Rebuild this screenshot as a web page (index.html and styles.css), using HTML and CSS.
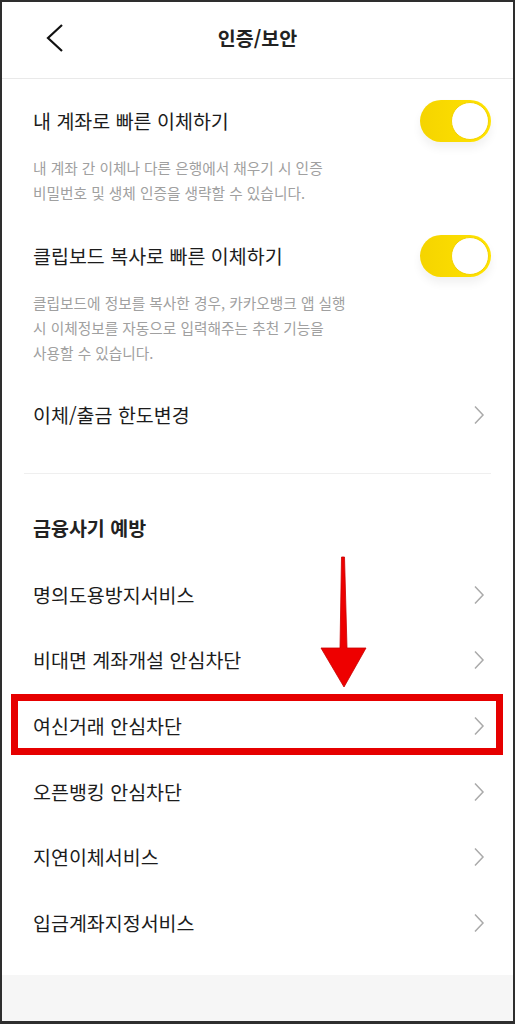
FILE: index.html
```html
<!DOCTYPE html>
<html lang="ko">
<head>
  <meta charset="UTF-8">
  <title>인증/보안</title>
  <link rel="stylesheet" href="styles.css">
</head>
<body>
  <div class="frame">
    <header class="topbar">
      <div class="back">
        <svg width="18" height="30" viewBox="0 0 18 30"><polyline points="16,2 2,15 16,28" fill="none" stroke="#111" stroke-width="2.2"/></svg>
      </div>
      <h1>인증/보안</h1>
      <div></div>
    </header>

    <main class="content">
      <!-- 토글 설정 -->
      <section class="setting first">
        <div class="setting-row">
          <span class="label">내 계좌로 빠른 이체하기</span>
          <span class="toggle on"><span class="knob"></span></span>
        </div>
        <p class="desc">내 계좌 간 이체나 다른 은행에서 채우기 시 인증<br>비밀번호 및 생체 인증을 생략할 수 있습니다.</p>
      </section>

      <section class="setting">
        <div class="setting-row">
          <span class="label">클립보드 복사로 빠른 이체하기</span>
          <span class="toggle on"><span class="knob"></span></span>
        </div>
        <p class="desc">클립보드에 정보를 복사한 경우, 카카오뱅크 앱 실행<br>시 이체정보를 자동으로 입력해주는 추천 기능을<br>사용할 수 있습니다.</p>
      </section>

      <ul class="menu limit">
        <li><span class="label">이체/출금 한도변경</span><svg class="chev" width="20" height="20" viewBox="0 0 20 20"><polyline points="4,1.5 12,10 4,18.5" fill="none" stroke="#aaa" stroke-width="1.5"/></svg></li>
      </ul>

      <hr class="divider">

      <h2 class="group-title">금융사기 예방</h2>
      <ul class="menu">
        <li><span class="label">명의도용방지서비스</span><svg class="chev" width="20" height="20" viewBox="0 0 20 20"><polyline points="4,1.5 12,10 4,18.5" fill="none" stroke="#aaa" stroke-width="1.5"/></svg></li>
        <li><span class="label">비대면 계좌개설 안심차단</span><svg class="chev" width="20" height="20" viewBox="0 0 20 20"><polyline points="4,1.5 12,10 4,18.5" fill="none" stroke="#aaa" stroke-width="1.5"/></svg></li>
        <li><span class="label">여신거래 안심차단</span><svg class="chev" width="20" height="20" viewBox="0 0 20 20"><polyline points="4,1.5 12,10 4,18.5" fill="none" stroke="#aaa" stroke-width="1.5"/></svg></li>
        <li><span class="label">오픈뱅킹 안심차단</span><svg class="chev" width="20" height="20" viewBox="0 0 20 20"><polyline points="4,1.5 12,10 4,18.5" fill="none" stroke="#aaa" stroke-width="1.5"/></svg></li>
        <li><span class="label">지연이체서비스</span><svg class="chev" width="20" height="20" viewBox="0 0 20 20"><polyline points="4,1.5 12,10 4,18.5" fill="none" stroke="#aaa" stroke-width="1.5"/></svg></li>
        <li><span class="label">입금계좌지정서비스</span><svg class="chev" width="20" height="20" viewBox="0 0 20 20"><polyline points="4,1.5 12,10 4,18.5" fill="none" stroke="#aaa" stroke-width="1.5"/></svg></li>
      </ul>
    </main>

    <div class="footer-space"></div>

    <!-- 강조 표시 -->
    <svg class="arrow" width="52" height="140" viewBox="0 0 52 140">
      <polygon points="23.5,4 26.5,4 29,95 48,95 26,134 3,95 22,95" fill="#ee0000" stroke="#c80000" stroke-width="0.8"/>
    </svg>
    <div class="highlight"></div>
  </div>
</body>
</html>
```

FILE: styles.css
```css
* {
  box-sizing: border-box;
}

html, body {
  margin: 0;
  padding: 0;
}

body {
  font-family: "Noto Sans CJK KR", "Noto Sans", sans-serif;
  color: #1c1c1c;
  background: #fff;
}

.frame {
  position: relative;
  height: 1024px;
  border: 2px solid #2e2e2e;
  border-bottom-width: 3px;
  display: flex;
  flex-direction: column;
  overflow: hidden;
}

.topbar {
  height: 77px;
  padding-bottom: 4px;
  border-bottom: 1px solid #e9e9e9;
  display: grid;
  grid-template-columns: 1fr auto 1fr;
  align-items: center;
}

.back {
  padding-left: 44px;
  display: flex;
  align-items: center;
}

.topbar h1 {
  margin: 0;
  font-size: 19.5px;
  font-weight: 700;
  color: #222;
  line-height: 28px;
}

.content {
  padding: 0 22px 19px 31px;
}

.setting {
  margin-top: 30px;
}

.setting.first {
  margin-top: 21px;
}

.setting-row {
  display: flex;
  align-items: center;
  justify-content: space-between;
  height: 42px;
}

.label {
  font-size: 19.5px;
  line-height: 28px;
  color: #1c1c1c;
}

.toggle {
  width: 71px;
  height: 42px;
  border-radius: 21px;
  background: linear-gradient(90deg, #f5d400, #ffe300);
  display: flex;
  align-items: center;
  justify-content: flex-end;
  padding-right: 2px;
  box-shadow: 0 6px 10px rgba(0, 0, 0, 0.06);
}

.knob {
  width: 38px;
  height: 38px;
  border-radius: 50%;
  background: #fff;
  border: 1.5px solid #f3d300;
}

.desc {
  margin: 13px 0 0;
  font-size: 14.7px;
  line-height: 25px;
  color: #a0a0a0;
}

.menu {
  list-style: none;
  margin: 0;
  padding: 0;
}

.menu li {
  height: 65.6px;
  display: flex;
  align-items: center;
  justify-content: space-between;
}

.menu.limit {
  margin-top: 17px;
}

.menu.limit li {
  height: 66px;
}

.divider {
  margin: 25px 0 0 -9px;
  border: none;
  border-top: 1px solid #efefef;
  height: 0;
}

.group-title {
  margin: 40px 0 20px;
  font-size: 19.5px;
  font-weight: 700;
  line-height: 28px;
  color: #222;
}

.footer-space {
  flex: 1;
  background: #f6f6f6;
}

.arrow {
  position: absolute;
  left: 316px;
  top: 551px;
}

.highlight {
  position: absolute;
  left: 9px;
  top: 692px;
  width: 492px;
  height: 61px;
  border: 7px solid #e60000;
}
```
